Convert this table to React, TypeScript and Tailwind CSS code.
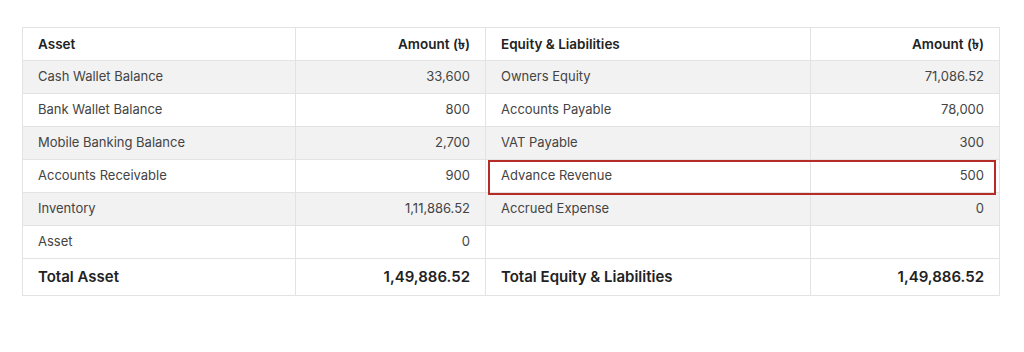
import React from "react";

const rows: [string, string, string, string][] = [
  ["Cash Wallet Balance", "33,600", "Owners Equity", "71,086.52"],
  ["Bank Wallet Balance", "800", "Accounts Payable", "78,000"],
  ["Mobile Banking Balance", "2,700", "VAT Payable", "300"],
  ["Accounts Receivable", "900", "Advance Revenue", "500"],
  ["Inventory", "1,11,886.52", "Accrued Expense", "0"],
  ["Asset", "0", "", ""],
];

export default function App() {
  return (
    <div className="w-[1024px] h-[352px] bg-white pt-[27px] pl-[22px]" style={{ fontFamily: "Inter, 'Noto Sans', sans-serif" }}>
      <div className="relative w-[977px]">
        <table className="w-[977px] border-collapse table-fixed text-[13px] text-[#444]">
          <colgroup>
            <col className="w-[273px]" />
            <col className="w-[190px]" />
            <col className="w-[325px]" />
            <col className="w-[189px]" />
          </colgroup>
          <thead>
            <tr className="h-[33px] text-[13.5px]">
              <th className="border border-[#e3e3e3] px-[15px] text-left font-semibold text-[#222]">Asset</th>
              <th className="border border-[#e3e3e3] px-[15px] text-right font-semibold text-[#222]">Amount (<span className="font-['Noto_Sans']">৳</span>)</th>
              <th className="border border-[#e3e3e3] px-[15px] text-left font-semibold text-[#222]">Equity &amp; Liabilities</th>
              <th className="border border-[#e3e3e3] px-[15px] text-right font-semibold text-[#222]">Amount (<span className="font-['Noto_Sans']">৳</span>)</th>
            </tr>
          </thead>
          <tbody>
            {rows.map((r, i) => (
              <tr key={i} className={`h-[33px] ${i % 2 === 0 ? "bg-[#f2f2f2]" : "bg-white"}`}>
                <td className="border border-[#e3e3e3] px-[15px] text-left">{r[0]}</td>
                <td className="border border-[#e3e3e3] px-[15px] text-right">{r[1]}</td>
                <td className="border border-[#e3e3e3] px-[15px] text-left">{r[2]}</td>
                <td className="border border-[#e3e3e3] px-[15px] text-right">{r[3]}</td>
              </tr>
            ))}
            <tr className="h-[37px] text-[15px] font-semibold text-[#222]">
              <td className="border border-[#e3e3e3] px-[15px] text-left">Total Asset</td>
              <td className="border border-[#e3e3e3] px-[15px] text-right">1,49,886.52</td>
              <td className="border border-[#e3e3e3] px-[15px] text-left">Total Equity &amp; Liabilities</td>
              <td className="border border-[#e3e3e3] px-[15px] text-right">1,49,886.52</td>
            </tr>
          </tbody>
        </table>
        <div className="absolute left-[466px] top-[133px] w-[508px] h-[35px] border-2 border-[#b52c27] pointer-events-none" />
      </div>
    </div>
  );
}
